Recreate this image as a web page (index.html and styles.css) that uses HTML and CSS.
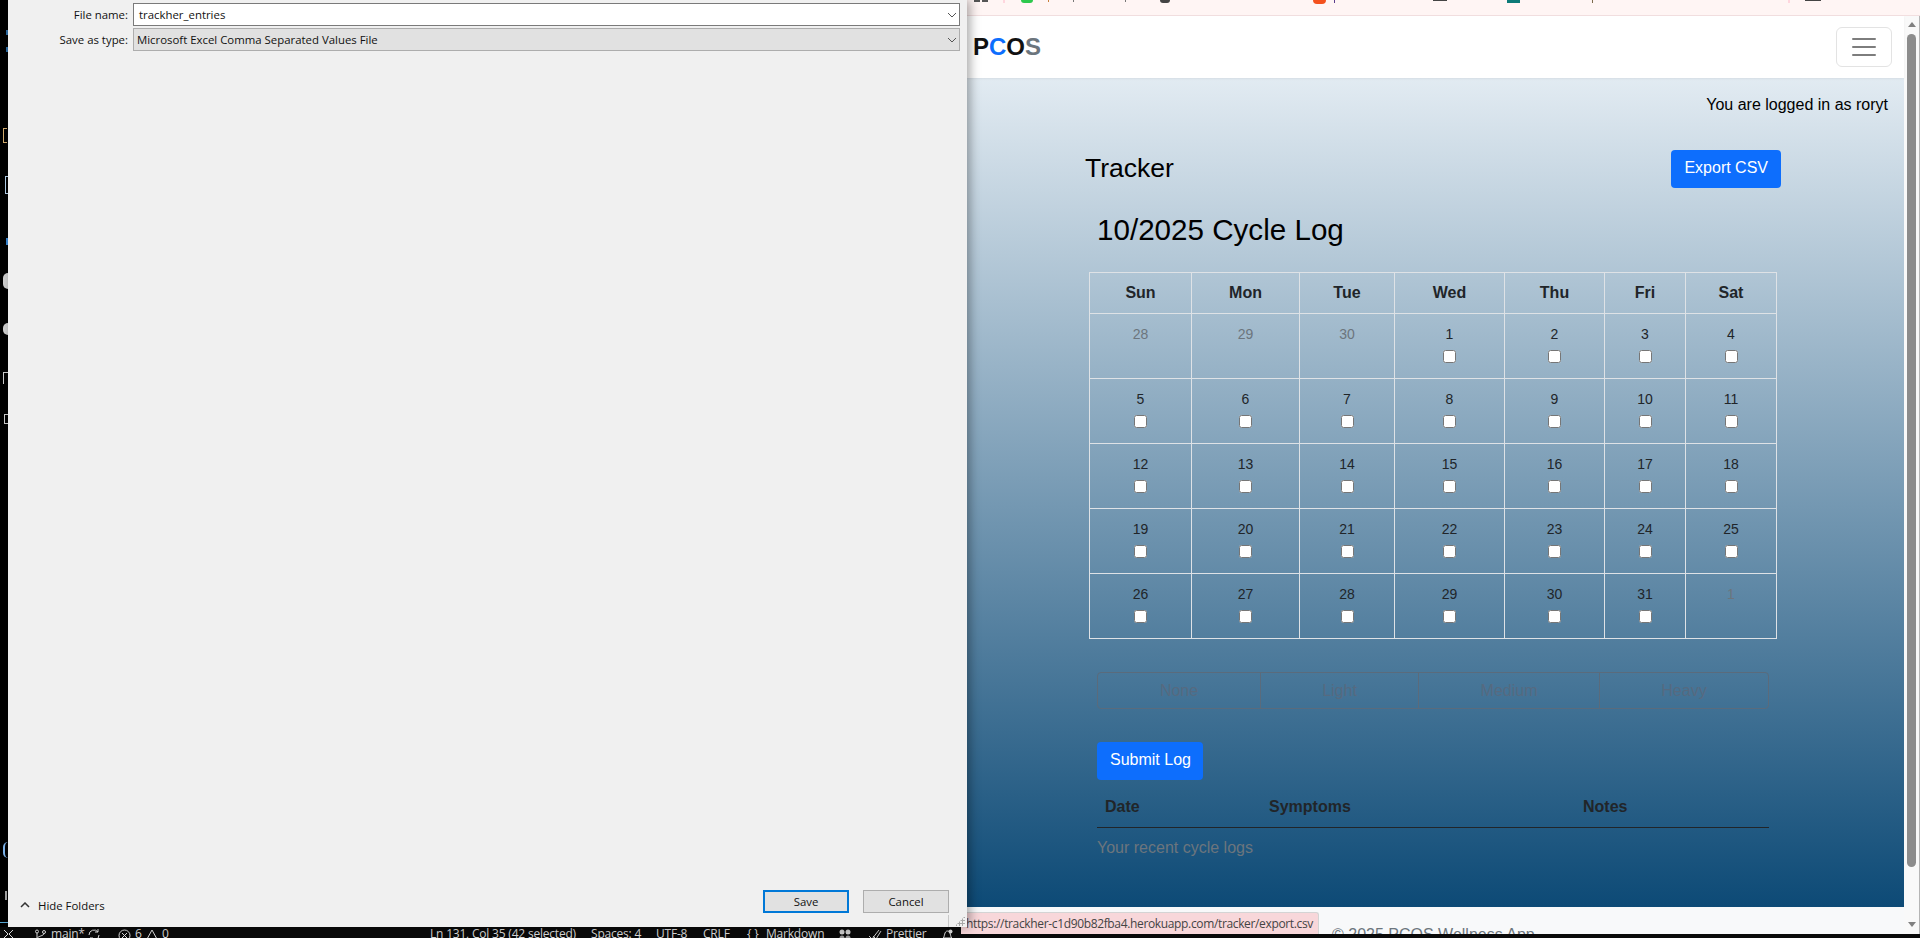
FILE: index.html
```html
<!DOCTYPE html>
<html lang="en">
<head>
<meta charset="utf-8">
<title>Tracker</title>
<link rel="stylesheet" href="styles.css">
</head>
<body>
<div class="desktop">
  <div class="editor-status">
    <span class="st st1"><svg width="11" height="11" viewBox="0 0 11 11"><path d="M1 1l4 4-4 4M10 1L6 5l4 4" fill="none" stroke="#ddd" stroke-width="1"/></svg></span>
    <span class="st st2"><svg width="12" height="12" viewBox="0 0 12 12"><circle cx="3" cy="2.5" r="1.5" fill="none" stroke="#ddd"/><circle cx="10" cy="3" r="1.5" fill="none" stroke="#ddd"/><path d="M3 4v8M10 4.5C10 7 3 7 3 10" fill="none" stroke="#ddd"/></svg></span>
    <span class="st st3">main*</span>
    <span class="st st4"><svg width="14" height="12" viewBox="0 0 14 12"><path d="M2 6a5 5 0 0 1 9-3M12 6a5 5 0 0 1-9 3M11 0v3H8M3 12V9h3" fill="none" stroke="#ddd"/></svg></span>
    <span class="st st5"><svg width="13" height="12" viewBox="0 0 13 12"><circle cx="6.5" cy="6.5" r="5.5" fill="none" stroke="#ddd"/><path d="M4 4l5 5M9 4l-5 5" stroke="#ddd"/></svg></span>
    <span class="st st6">6</span>
    <span class="st st7"><svg width="12" height="12" viewBox="0 0 12 12"><path d="M6 1l5.5 10H.5z" fill="none" stroke="#ddd"/></svg></span>
    <span class="st st8">0</span>
    <span class="st st9">Ln 131, Col 35 (42 selected)</span>
    <span class="st st10">Spaces: 4</span>
    <span class="st st11">UTF-8</span>
    <span class="st st12">CRLF</span>
    <span class="st st13">{ }</span>
    <span class="st st14">Markdown</span>
    <span class="st st15"><svg width="14" height="12" viewBox="0 0 14 12"><circle cx="4" cy="3" r="2.5" fill="#ccc"/><circle cx="10" cy="3" r="2.5" fill="#ccc"/><circle cx="4" cy="9" r="2.5" fill="#999"/><circle cx="10" cy="9" r="2.5" fill="#999"/></svg></span>
    <span class="st st16"><svg width="14" height="12" viewBox="0 0 14 12"><path d="M1 7l3 3 7-9M5 7l3 3 5-8" fill="none" stroke="#ccc"/></svg></span>
    <span class="st st17">Prettier</span>
    <span class="st st18"><svg width="11" height="12" viewBox="0 0 11 12"><path d="M1 9c2-1 1-7 4.500-7S8 8 10 9z" fill="none" stroke="#ddd"/><circle cx="8.500" cy="2.500" r="2" fill="#ddd"/></svg></span>
  </div>

  <div class="edge-bits">
    <span class="bit b0"></span><span class="bit b0b"></span><span class="bit b1"></span><span class="bit b2"></span><span class="bit b3"></span><span class="bit b4"></span><span class="bit b5"></span><span class="bit b6"></span><span class="bit b7"></span><span class="bit b8"></span><span class="bit b9"></span><span class="bit b10"></span>
  </div>

  <div class="browser">
    <div class="tabstrip">
      <span class="frag frag-grid"></span><span class="frag frag-pink"></span><span class="frag frag-green"></span>
      <span class="frag frag-tick t1"></span><span class="frag frag-tick t2"></span><span class="frag frag-tick t3"></span>
      <span class="frag frag-dark"></span><span class="frag frag-orange"></span><span class="frag frag-tick t4"></span><span class="frag frag-bar"></span><span class="frag frag-teal"></span><span class="frag frag-tick t5"></span><span class="frag frag-pink2"></span><span class="frag frag-bar2"></span>
    </div>
    <div class="browser-body">
      <div class="viewport">
        <nav class="navbar">
          <span class="brand"><span>P</span><span class="c-blue">C</span><span>O</span><span class="c-gray">S</span></span>
          <button class="toggler"><svg width="30" height="30" viewBox="0 0 30 30"><path d="M4 7h22M4 15h22M4 23h22" stroke="#7d7d7d" stroke-width="2" stroke-linecap="round" fill="none"/></svg></button>
        </nav>
        <main class="page">
          <p class="logged">You are logged in as roryt</p>
          <section class="tracker">
            <div class="tracker-head">
              <h1>Tracker</h1>
              <a class="btn">Export CSV</a>
            </div>
            <div class="inner">
              <h2>10/2025 Cycle Log</h2>
              <table class="cal">
                <colgroup><col class="c1"><col class="c2"><col class="c3"><col class="c4"><col class="c5"><col class="c6"><col class="c7"></colgroup>
                <thead><tr><th>Sun</th><th>Mon</th><th>Tue</th><th>Wed</th><th>Thu</th><th>Fri</th><th>Sat</th></tr></thead>
                <tbody>
                  <tr><td class="muted">28</td><td class="muted">29</td><td class="muted">30</td><td>1<input type="checkbox"></td><td>2<input type="checkbox"></td><td>3<input type="checkbox"></td><td>4<input type="checkbox"></td></tr>
                  <tr><td>5<input type="checkbox"></td><td>6<input type="checkbox"></td><td>7<input type="checkbox"></td><td>8<input type="checkbox"></td><td>9<input type="checkbox"></td><td>10<input type="checkbox"></td><td>11<input type="checkbox"></td></tr>
                  <tr><td>12<input type="checkbox"></td><td>13<input type="checkbox"></td><td>14<input type="checkbox"></td><td>15<input type="checkbox"></td><td>16<input type="checkbox"></td><td>17<input type="checkbox"></td><td>18<input type="checkbox"></td></tr>
                  <tr><td>19<input type="checkbox"></td><td>20<input type="checkbox"></td><td>21<input type="checkbox"></td><td>22<input type="checkbox"></td><td>23<input type="checkbox"></td><td>24<input type="checkbox"></td><td>25<input type="checkbox"></td></tr>
                  <tr><td>26<input type="checkbox"></td><td>27<input type="checkbox"></td><td>28<input type="checkbox"></td><td>29<input type="checkbox"></td><td>30<input type="checkbox"></td><td>31<input type="checkbox"></td><td class="muted">1</td></tr>
                </tbody>
              </table>
              <div class="flow-group">
                <span class="seg s1">None</span><span class="seg s2">Light</span><span class="seg s3">Medium</span><span class="seg s4">Heavy</span>
              </div>
              <a class="btn submit">Submit Log</a>
              <div class="log-head"><span class="lh1">Date</span><span class="lh2">Symptoms</span><span>Notes</span></div>
              <p class="recent">Your recent cycle logs</p>
            </div>
          </section>
        </main>
        <footer class="foot">© 2025 PCOS Wellness App</footer>
      </div>
      <div class="scrollbar">
        <span class="arrow-up"></span>
        <span class="thumb"></span>
        <span class="arrow-down"></span>
      </div>
    </div>
  </div>

  <div class="url-tip">https://trackher-c1d90b82fba4.herokuapp.com/tracker/export.csv</div>

  <div class="dialog">
    <div class="fields">
      <div class="field">
        <label>File name:</label>
        <div class="combo combo-edit"><span>trackher_entries</span><svg width="10" height="6" viewBox="0 0 10 6"><path d="M1 1l4 4 4-4" fill="none" stroke="#555" stroke-width="1"/></svg></div>
      </div>
      <div class="field">
        <label>Save as type:</label>
        <div class="combo combo-type"><span>Microsoft Excel Comma Separated Values File</span><svg width="10" height="6" viewBox="0 0 10 6"><path d="M1 1l4 4 4-4" fill="none" stroke="#555" stroke-width="1"/></svg></div>
      </div>
    </div>
    <div class="dialog-foot">
      <span class="hide-folders"><svg width="10" height="6" viewBox="0 0 10 6"><path d="M1 5l4-4 4 4" fill="none" stroke="#333" stroke-width="1.500"/></svg>Hide Folders</span>
      <div class="dlg-buttons">
        <button class="wbtn primary">Save</button>
        <button class="wbtn">Cancel</button>
      </div>
    </div>
    <span class="grip-line"></span>
    <span class="grip"></span>
  </div>
</div>
</body>
</html>
```
FILE: styles.css
```css
* { box-sizing: border-box; }
html, body { margin: 0; height: 100%; overflow: hidden; }
body { font-family: "Liberation Sans", Arial, sans-serif; font-size: 16px; line-height: 1.5; color: #000; background: #000; }
.desktop { position: relative; width: 1920px; height: 938px; overflow: hidden; background: #000; }

/* browser window */
.browser { position: absolute; left: 967px; top: 0; width: 953px; height: 934px; display: flex; flex-direction: column; background: #fff; }
.tabstrip { position: relative; height: 16px; flex: none; background: #fff5f4; border-bottom: 1px solid #f2dfe0; }
.frag { position: absolute; top: 0; height: 3px; }
.frag-grid { left: 7px; width: 6px; height: 2px; background: #555; box-shadow: 8px 0 0 #555; }
.frag-pink { left: 36px; width: 2px; background: #ffd6de; }
.frag-green { left: 54px; width: 12px; background: #2dc84d; border-radius: 0 0 6px 6px; }
.frag-tick { width: 1px; height: 2px; background: #777; }
.t1 { left: 81px; background: #c9803c; } .t2 { left: 106px; } .t3 { left: 158px; } .t4 { left: 367px; height: 3px; background: #5a3c8c; } .t5 { left: 625px; height: 3px; background: #7c6a4c; }
.frag-dark { left: 193px; width: 10px; background: #444; border-radius: 0 0 6px 6px; }
.frag-orange { left: 346px; width: 13px; height: 4px; background: #f4511e; border-radius: 0 0 7px 7px; }
.frag-bar { left: 466px; width: 14px; height: 1px; background: #444; }
.frag-teal { left: 540px; width: 13px; background: #0d7a78; }
.frag-pink2 { left: 821px; width: 2px; background: #ffd6de; }
.frag-bar2 { left: 838px; width: 16px; height: 1px; background: #444; }
.browser-body { flex: 1; display: flex; min-height: 0; }
.viewport { flex: 1; min-width: 0; display: flex; flex-direction: column; }
.scrollbar { width: 16px; flex: none; background: #f9f9f9; border-right: 1px solid #b5b5b5; display: flex; flex-direction: column; align-items: center; padding: 6px 0 0; }
.arrow-up { width: 0; height: 0; border: 4px solid transparent; border-top: 0; border-bottom: 5px solid #808080; }
.thumb { width: 9px; height: 833px; margin-top: 7px; background: #8c8c8c; border-radius: 5px; }
.arrow-down { width: 0; height: 0; margin-top: 55px; border: 4px solid transparent; border-bottom: 0; border-top: 5px solid #808080; }

.navbar { height: 62px; flex: none; background: #fff; display: flex; align-items: center; justify-content: space-between; padding: 0 12px 0 6px; box-shadow: 0 1px 2px rgba(0,0,0,.06); position: relative; }
.brand { font-size: 24px; font-weight: 700; color: #111; }
.c-blue { color: #0d6efd; }
.c-gray { color: #6c757d; }
.toggler { width: 56px; height: 40px; padding: 0; display: flex; align-items: center; justify-content: center; background: transparent; border: 1px solid #e3e3e3; border-radius: 6px; }

.page { flex: 1; min-height: 0; background: linear-gradient(180deg, #e2ebf2 0%, #0d4a76 100%); padding: 15px 16px 0 0; }
.logged { margin: 0; text-align: right; }
.tracker { width: 696px; margin: 33px 0 0 118px; }
.tracker-head { display: flex; align-items: center; justify-content: space-between; height: 38px; }
h1 { margin: 0; font-size: 26.500px; font-weight: 400; line-height: 1.2; }
.btn { display: block; background: #0d6efd; color: #fff; border-radius: 4px; padding: 6px 13px 8px; height: 38px; line-height: 24px; white-space: nowrap; }
.inner { padding: 0 12px; }
h2 { margin: 24px 0; font-size: 29.600px; font-weight: 400; line-height: 36px; }
.cal { width: 687px; margin: 0 -8px; border-collapse: collapse; table-layout: fixed; color: #212529; }
.c1 { width: 102px; } .c2 { width: 108px; } .c3 { width: 95px; } .c4 { width: 110px; } .c5 { width: 100px; } .c6 { width: 81px; } .c7 { width: 91px; }
.cal th, .cal td { border: 1px solid #dee2e6; text-align: center; }
.cal th { height: 41px; font-weight: 700; font-size: 16px; padding: 0; }
.cal td { height: 65px; padding: 10px 0 0; vertical-align: top; font-size: 14px; line-height: 21px; }
.cal td.muted { color: #6c757d; }
.cal input { display: block; width: 13px; height: 13px; margin: 5px auto 0; }
.flow-group { display: flex; height: 37px; margin-top: 33px; border: 1px solid #5a6b7c; border-radius: 4px; color: #566a80; }
.seg { display: flex; align-items: center; justify-content: center; border-left: 1px solid #5a6b7c; }
.s1 { width: 162px; border-left: 0; } .s2 { width: 158px; } .s3 { width: 181px; } .s4 { flex: 1; }
.submit { margin-top: 33px; width: 106px; }
.log-head { display: flex; height: 40px; align-items: center; margin-top: 8px; padding: 0 0 2px 8px; font-weight: 700; color: #212529; border-bottom: 1px solid #212529; }
.lh1 { width: 164px; } .lh2 { width: 314px; }
.recent { margin: 8px 0 0; color: #6c757d; }
.foot { height: 27px; flex: none; background: #f8f9fa; padding: 16px 0 0 365px; color: #6c757d; overflow: hidden; line-height: 24px; }

.url-tip { position: absolute; left: 961px; top: 912px; width: 358px; height: 22px; padding-left: 5px; background: #f8d7da; border: 1px solid #d4d4d4; border-width: 1px 1px 0 0; border-radius: 0 3px 0 0; font-size: 12px; line-height: 21px; color: #444; white-space: nowrap; overflow: hidden; font-family: "Open Sans", sans-serif; letter-spacing: -.35px; }

/* editor status bar */
.editor-status { position: absolute; left: 0; right: 0; top: 927px; height: 11px; background: #0a0a0a; color: #d8d8d8; font-family: "Open Sans", sans-serif; font-size: 12px; line-height: 13px; letter-spacing: -.2px; display: flex; padding-left: 3px; white-space: nowrap; overflow: hidden; }
.st { flex: none; display: block; height: 13px; }
.st svg { display: block; margin-top: 2px; }
.st1 { width: 31px; } .st2 { width: 17px; } .st3 { width: 36px; } .st4 { width: 31px; } .st5 { width: 17px; } .st6 { width: 11px; } .st7 { width: 16px; } .st8 { width: 268px; } .st9 { width: 161px; } .st10 { width: 65px; } .st11 { width: 47px; } .st12 { width: 44px; } .st13 { width: 19px; } .st14 { width: 72px; } .st15 { width: 30px; } .st16 { width: 18px; } .st17 { width: 56px; } .st18 { width: 12px; }

.edge-bits { position: absolute; left: 0; top: 0; width: 8px; height: 938px; }
.bit { position: absolute; background: #ddd; }
.b0 { left: 6px; top: 30px; width: 2px; height: 5px; background: #2f6fa8; }
.b0b { left: 6px; top: 47px; width: 2px; height: 5px; background: #2f6fa8; }
.b1 { left: 3px; top: 128px; width: 4px; height: 15px; background: transparent; border: 1px solid #d8b070; border-right: 0; }
.b2 { left: 5px; top: 176px; width: 3px; height: 18px; background: transparent; border: 1px solid #b8d4ee; border-right: 0; }
.b3 { left: 6px; top: 238px; width: 2px; height: 7px; background: #3a8ad8; }
.b4 { left: 3px; top: 273px; width: 5px; height: 16px; border-radius: 8px 0 0 8px; background: #d2d2d2; }
.b5 { left: 3px; top: 323px; width: 5px; height: 12px; border-radius: 8px 0 0 8px; background: #d2d2d2; }
.b6 { left: 3px; top: 372px; width: 5px; height: 12px; background: transparent; border-top: 1px solid #cfcfcf; border-left: 1px solid #cfcfcf; }
.b7 { left: 4px; top: 414px; width: 4px; height: 10px; background: transparent; border: 1px solid #cfcfcf; border-right: 0; }
.b8 { left: 3px; top: 842px; width: 5px; height: 16px; background: transparent; border-left: 2px solid #7fb6ee; border-radius: 8px 0 0 8px; }
.b9 { left: 0; top: 922px; width: 8px; height: 1px; background: #5aa9d6; }
.b10 { left: 5px; top: 891px; width: 2px; height: 9px; background: #aaa; }

/* save dialog */
.dialog { position: absolute; left: 8px; top: 0; width: 959px; height: 927px; background: #f0f0f0; display: flex; flex-direction: column; justify-content: space-between; box-shadow: 3px 0 10px rgba(0,0,0,.35); font-family: "Open Sans", sans-serif; font-size: 11.400px; color: #111; }
.fields { padding: 3px 7px 0 0; display: flex; flex-direction: column; gap: 2px; }
.field { display: flex; align-items: center; height: 23px; }
.field label { width: 125px; text-align: right; padding-right: 5px; flex: none; }
.combo { flex: 1; height: 23px; display: flex; align-items: center; justify-content: space-between; padding: 0 2px 0 5px; line-height: 1; }
.combo-edit { background: #fff; border: 1px solid #7a7a7a; }
.combo-type { background: #e1e1e1; border: 1px solid #adadad; padding-left: 3px; }
.dialog-foot { display: flex; align-items: flex-end; justify-content: space-between; padding: 0 18px 14px 12px; }
.hide-folders { display: flex; align-items: center; gap: 8px; margin-bottom: -1px; }
.dlg-buttons { display: flex; gap: 14px; }
.wbtn { width: 86px; height: 23px; background: #e1e1e1; border: 1px solid #adadad; font: inherit; color: #111; padding: 0; }
.wbtn.primary { border: 2px solid #0078d7; }
.grip-line { position: absolute; right: 18px; bottom: 0; width: 1px; height: 12px; background: #c8c8c8; }
.grip { position: absolute; right: 2px; bottom: 1px; width: 10px; height: 10px; clip-path: polygon(100% 0, 100% 100%, 0 100%); background: radial-gradient(circle, #a8a8a8 1px, transparent 1.2px) 0 0 / 3px 3px; }
```
